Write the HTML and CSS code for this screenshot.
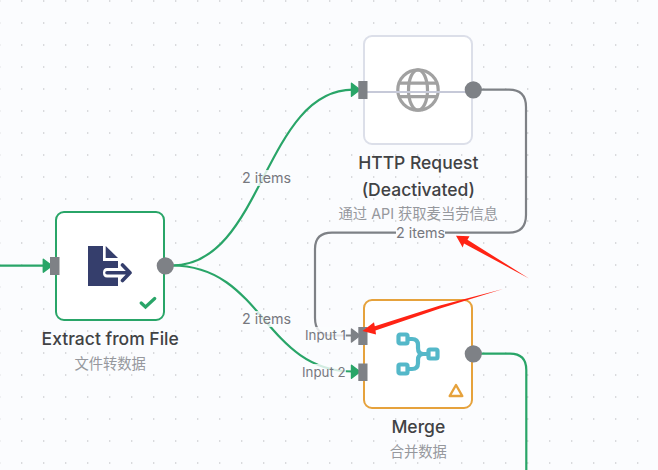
FILE: index.html
```
<!DOCTYPE html>
<html lang="zh-CN">
<head>
<meta charset="utf-8">
<title>Workflow</title>
<link rel="stylesheet" href="styles.css">
</head>
<body>
<main class="canvas">
  <svg class="layer" viewBox="0 0 658 470">
    <defs><pattern id="dots" width="22" height="22" patternUnits="userSpaceOnUse"><rect x="21" y="0" width="1" height="2" fill="#d9dadd"/><rect x="0" y="0" width="1" height="2" fill="#eff0f2"/></pattern></defs>
    <rect width="658" height="470" fill="url(#dots)"/>
    <g class="edge">
      <path d="M0 265.7H44"/>
      <path d="M172 265.5C263 265.5 264 89.7 353 89.7"/>
      <path d="M172 265.5C263 265.5 264 371.5 353 371.5"/>
      <path d="M480 353.7H510Q526.3 353.7 526.3 370V470"/>
      <path class="muted" d="M480 89.7H509Q526 89.7 526 107V215Q526 232.7 509 232.7H332Q315 232.7 315 249V318Q315 335.5 332 335.5H353"/>
    </g>
    <g class="arrow">
      <path d="M43.3 259.2L52 265.7L43.3 272.2Z"/>
      <path d="M351.5 83.2L360 89.7L351.5 96.2Z"/>
      <path d="M351.5 365.2L360 371.7L351.5 378.2Z"/>
      <path class="muted" d="M351.5 329L360 335.5L351.5 342Z"/>
    </g>
  </svg>

  <section class="node extract">
    <svg class="file-icon" viewBox="0 0 44 40"><path d="M0 0H15V15H30V22H19Q15 22 15 26.7Q15 31.5 19 31.5H30V40H0Z"/><path d="M17.7 0L30 12H17.7Z"/><path class="shaft" d="M19 26.7H42M34.5 19L42 26.7L34.5 34.5"/></svg>
    <svg class="check" viewBox="0 0 18 14"><path d="M2.2 7L6.5 11L15.7 2.5"/></svg>
  </section>
  <section class="node http">
    <svg class="globe" viewBox="0 0 44 44"><circle cx="22" cy="22" r="20.2"/><ellipse cx="22" cy="22" rx="9.5" ry="20.2"/><path d="M3 15.1H41M3 28.7H41"/></svg>
    <i class="strike"></i>
  </section>
  <section class="node merge">
    <svg class="merge-icon" viewBox="0 0 44 44"><rect x="2.5" y="2.5" width="9" height="9" rx="1.5"/><rect x="2.5" y="32.5" width="9" height="9" rx="1.5"/><rect x="32.5" y="17.5" width="9" height="9" rx="1.5"/><path d="M12 7H16Q22 7 22 13V16Q22 22 27.5 22H32M12 37H16Q22 37 22 31V28Q22 22 27.5 22"/></svg>
    <svg class="warning" viewBox="0 0 16 15"><path d="M8 2L14.3 13H1.7Z"/></svg>
  </section>

  <svg class="layer ports" viewBox="0 0 658 470">
    <rect x="50" y="257" width="9.5" height="18"/><circle cx="165.3" cy="265.8" r="8.6"/>
    <rect x="358.3" y="81" width="9.2" height="18"/><circle cx="473.3" cy="89.8" r="8.6"/>
    <rect x="358.3" y="327" width="9.2" height="18"/><rect x="358.3" y="363.5" width="9.2" height="17.5"/><circle cx="473.3" cy="353.8" r="8.6"/>
  </svg>

  <div class="caption extract-caption"><strong>Extract from File</strong><small>文件转数据</small></div>
  <div class="caption http-caption"><strong>HTTP Request</strong><strong>(Deactivated)</strong><small>通过 API 获取麦当劳信息</small></div>
  <div class="caption merge-caption"><strong>Merge</strong><small>合并数据</small></div>

  <span class="items items-top">2 items</span>
  <span class="items items-bottom">2 items</span>
  <span class="items items-loop">2 items</span>
  <span class="input input-one">Input 1</span>
  <span class="input input-two">Input 2</span>

  <svg class="layer pointer" viewBox="0 0 658 470">
    <path d="M456 235.8L469.5 236.3L467.5 239.8L529 278.5L464 243.5L462.7 247.5Z"/>
    <path d="M362.5 331L374 322.2L374.8 326.2L440 305.5L503 289L440 308.5L375.5 330.5L376 334.5Z"/>
  </svg>
</main>
</body>
</html>
```
FILE: styles.css
```
body { margin: 0; }
.canvas {
  position: relative;
  width: 658px;
  height: 470px;
  overflow: hidden;
  background: #fbfcfe;
  font-family: Inter, "Noto Sans CJK SC", sans-serif;
}
.layer { position: absolute; left: 0; top: 0; width: 658px; height: 470px; }
.edge path { fill: none; stroke: #29a568; stroke-width: 2.2; }
.edge .muted { stroke: #7e8186; }
.arrow path { fill: #29a568; stroke: #29a568; stroke-width: 1.4; stroke-linejoin: round; }
.arrow .muted { fill: #7e8186; stroke: #7e8186; }
.ports { fill: #7e8186; }
.pointer { fill: #ff2314; }

.node {
  position: absolute;
  box-sizing: border-box;
  width: 110px;
  height: 110px;
  border: 2px solid;
  border-radius: 9px;
  background: #fff;
}
.node svg { position: absolute; fill: none; }
.extract { left: 55px; top: 211px; border-color: #29a568; }
.http { left: 363px; top: 35px; border-color: #dcdfe9; }
.merge { left: 363px; top: 299px; border-color: #e6a23c; }

.node .file-icon { left: 31px; top: 33px; width: 44px; height: 40px; fill: #353e6c; }
.file-icon .shaft { fill: none; stroke: #353e6c; stroke-width: 3.6; stroke-linecap: round; stroke-linejoin: round; }
.check { left: 82px; top: 83px; width: 18px; height: 14px; stroke: #29a568; stroke-width: 3.2; stroke-linecap: round; }
.globe { left: 31px; top: 30.7px; width: 44px; height: 44px; stroke: #a1a1a1; stroke-width: 3.2; }
.strike { position: absolute; left: 2px; top: 54px; width: 101px; height: 2px; background: #c6c9d8; }
.merge-icon { left: 31px; top: 31px; width: 44px; height: 44px; stroke: #54b8c9; stroke-width: 4.2; }
.warning { left: 82.5px; top: 82px; width: 16px; height: 15px; stroke: #e6a23c; stroke-width: 2.4; stroke-linejoin: round; }

.caption {
  position: absolute;
  display: flex;
  flex-direction: column;
  align-items: center;
  width: 200px;
  color: #414244;
  white-space: nowrap;
}
.caption strong { font-size: 17.5px; font-weight: 500; line-height: 27px; }
.caption small { font-size: 14.3px; line-height: 22px; color: #96989d; }
.extract-caption { left: 10.2px; top: 325px; }
.extract-caption small { margin-top: 1px; }
.http-caption { left: 318.3px; top: 149px; }
.merge-caption { left: 318.3px; top: 413px; }
.merge-caption small { margin-top: 1px; }

.items, .input { position: absolute; line-height: 16px; color: #77787e; white-space: nowrap; background: rgba(251, 252, 254, .8); }
.items { font-size: 14.3px; }
.items-top { left: 242px; top: 170px; }
.items-bottom { left: 242px; top: 311px; }
.items-loop { left: 396px; top: 225px; background: #fbfcfe; }
.input { font-size: 13.3px; }
.input-one { left: 305px; top: 327px; }
.input-two { left: 302px; top: 364px; }
```
